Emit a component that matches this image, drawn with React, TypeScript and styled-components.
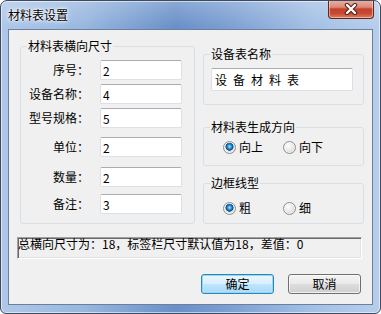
import React from 'react';
import styled, { createGlobalStyle } from 'styled-components';

const GlobalStyle = createGlobalStyle`
  html, body {
    margin: 0;
    padding: 0;
    background: #ffffff;
  }
  body {
    font-family: "Noto Sans CJK SC", "Noto Sans", sans-serif;
    font-size: 12px;
    color: #000;
  }
`;

const rows = [
  { label: '序号', value: '2', gap: 0 },
  { label: '设备名称', value: '4', gap: 4 },
  { label: '型号规格', value: '5', gap: 4 },
  { label: '单位', value: '2', gap: 9 },
  { label: '数量', value: '2', gap: 10 },
  { label: '备注', value: '3', gap: 7 },
];

function Radio({ label, checked }: { label: string; checked?: boolean }) {
  return (
    <RadioLabel>
      <RadioDot $checked={!!checked} />
      {label}
    </RadioLabel>
  );
}

function App() {
  return (
    <>
      <GlobalStyle />
      <Window>
        <TitleBar>
          <Title>材料表设置</Title>
          <CloseButton>
            <svg width="14" height="12" viewBox="0 0 14 12">
              <path
                d="M3 2 L11 10 M11 2 L3 10"
                stroke="#4a2219"
                strokeWidth="4.4"
                strokeLinecap="round"
              />
              <path
                d="M3 2 L11 10 M11 2 L3 10"
                stroke="#ffffff"
                strokeWidth="2.4"
                strokeLinecap="round"
              />
            </svg>
          </CloseButton>
        </TitleBar>
        <Client>
          <Columns>
            <SizeGroup>
              <Legend>材料表横向尺寸</Legend>
              {rows.map((row) => (
                <FieldRow key={row.label} $gap={row.gap}>
                  <FieldLabel>{row.label}：</FieldLabel>
                  <TextBox readOnly defaultValue={row.value} />
                </FieldRow>
              ))}
            </SizeGroup>
            <RightColumn>
              <NameGroup>
                <Legend>设备表名称</Legend>
                <WideBox readOnly defaultValue="设 备 材 料 表" />
              </NameGroup>
              <OptionGroup $height={47} $top={14} $pad={4}>
                <Legend>材料表生成方向</Legend>
                <RadioRow>
                  <Radio label="向上" checked />
                  <Radio label="向下" />
                </RadioRow>
              </OptionGroup>
              <OptionGroup $height={49} $top={9} $pad={9}>
                <Legend>边框线型</Legend>
                <RadioRow>
                  <Radio label="粗" checked />
                  <Radio label="细" />
                </RadioRow>
              </OptionGroup>
            </RightColumn>
          </Columns>
          <StatusBox>总横向尺寸为：18，标签栏尺寸默认值为18，差值：0</StatusBox>
          <ButtonRow>
            <DefaultButton>确定</DefaultButton>
            <PushButton>取消</PushButton>
          </ButtonRow>
        </Client>
      </Window>
    </>
  );
}

export default App;

const Window = styled.div`
  box-sizing: border-box;
  width: 381px;
  height: 314px;
  border: 1px solid #3d4b61;
  border-radius: 7px 7px 6px 6px;
  background:
    linear-gradient(180deg, rgba(255, 255, 255, 0.22) 0px, rgba(255, 255, 255, 0) 26px),
    linear-gradient(
      90deg,
      #afc8e9 0%,
      #98b7df 22%,
      #6990c8 46%,
      #7c9fd2 60%,
      #a4c0e5 82%,
      #b6ceec 100%
    );
  box-shadow: inset 0 0 0 1px rgba(255, 255, 255, 0.55);
  overflow: hidden;
`;

const TitleBar = styled.div`
  display: flex;
  align-items: flex-start;
  height: 28px;
  padding-left: 7px;
`;

const Title = styled.div`
  margin-top: 6px;
  line-height: 16px;
  font-size: 12px;
  color: #000;
  text-shadow: 0 0 6px #ffffff, 0 0 3px #ffffff, 0 0 2px #ffffff;
`;

const CloseButton = styled.div`
  display: flex;
  align-items: center;
  justify-content: center;
  box-sizing: border-box;
  width: 46px;
  height: 19px;
  margin-left: auto;
  margin-right: 6px;
  margin-top: -1px;
  border: 1px solid #5a2a22;
  border-top: none;
  border-radius: 0 0 4px 4px;
  background: linear-gradient(
    180deg,
    #eab3a6 0%,
    #d98a78 40%,
    #c4402a 50%,
    #c94a32 75%,
    #e07d5e 100%
  );
  box-shadow: inset 0 0 0 1px rgba(255, 220, 210, 0.55);
`;

const Client = styled.div`
  box-sizing: border-box;
  height: 276px;
  margin: 0 7px;
  border: 1px solid #6c7f9c;
  background: #f0f0f0;
  padding: 8px 0 0 11px;
`;

const Columns = styled.div`
  display: flex;
  align-items: flex-start;
  gap: 8px;
`;

const GroupBase = styled.fieldset`
  box-sizing: border-box;
  margin: 0;
  min-width: 0;
  border: 1px solid #d5dfe5;
  border-radius: 3px;
`;

const Legend = styled.legend`
  margin-left: 6px;
  padding: 0 1px;
  line-height: 16px;
  font-size: 12px;
  color: #000;
`;

const SizeGroup = styled(GroupBase)`
  width: 175px;
  height: 186px;
  padding: 6px 0 0 0;
`;

const FieldRow = styled.div<{ $gap: number }>`
  display: flex;
  align-items: center;
  height: 20px;
  margin-top: ${(p) => p.$gap}px;
`;

const FieldLabel = styled.span`
  width: 68px;
  text-align: right;
  line-height: 20px;
`;

const TextBox = styled.input`
  box-sizing: border-box;
  width: 82px;
  height: 20px;
  margin: 0 0 0 11px;
  padding: 0 2px;
  border: 1px solid #dbdfe6;
  border-top-color: #abadb3;
  border-radius: 2px;
  background: #ffffff;
  font-family: "Noto Sans CJK SC", sans-serif;
  font-size: 12px;
  color: #000;
  outline: none;
`;

const RightColumn = styled.div`
  display: flex;
  flex-direction: column;
  width: 161px;
  margin-top: 8px;
`;

const NameGroup = styled(GroupBase)`
  width: 161px;
  height: 59px;
  padding: 6px 0 0 0;
`;

const WideBox = styled(TextBox)`
  width: 142px;
  height: 23px;
  margin-left: 7px;
  padding-left: 3px;
  word-spacing: 3.3px;
`;

const OptionGroup = styled(GroupBase)<{ $height: number; $top: number; $pad: number }>`
  width: 161px;
  height: ${(p) => p.$height}px;
  margin-top: ${(p) => p.$top}px;
  padding: ${(p) => p.$pad}px 0 0 0;
`;

const RadioRow = styled.div`
  display: flex;
  align-items: center;
  height: 16px;
  padding-left: 19px;
`;

const RadioLabel = styled.label`
  display: flex;
  align-items: center;
  gap: 3px;
  width: 60px;
  line-height: 16px;
`;

const RadioDot = styled.span<{ $checked: boolean }>`
  box-sizing: border-box;
  width: 13px;
  height: 13px;
  border: 1px solid #8e8f8f;
  border-radius: 50%;
  background: ${(p) =>
    p.$checked
      ? 'radial-gradient(circle at 50% 42%, #b8ecff 0px, #36a3e6 1.6px, #1466ad 3px, #0d3f74 3.8px, rgba(255,255,255,0) 4.3px), radial-gradient(circle at 40% 35%, #ffffff 0%, #e2e2e2 60%, #c4c4c4 100%)'
      : 'radial-gradient(circle at 40% 35%, #ffffff 0%, #e4e4e4 55%, #c6c6c6 100%)'};
  box-shadow: inset 0 0 0 1px rgba(255, 255, 255, 0.6);
`;

const StatusBox = styled.div`
  box-sizing: border-box;
  width: 345px;
  height: 22px;
  margin: 13px 0 0 -3px;
  border: 1px solid;
  border-color: #a0a0a0 #ffffff #ffffff #a0a0a0;
  box-shadow: inset 1px 1px 0 #696969, inset -1px -1px 0 #e3e3e3;
  line-height: 12px;
  white-space: nowrap;
  font-size: 12px;
`;

const ButtonRow = styled.div`
  display: flex;
  justify-content: flex-end;
  gap: 14px;
  margin: 15px 11px 0 0;
`;

const PushButton = styled.div`
  box-sizing: border-box;
  display: flex;
  align-items: center;
  justify-content: center;
  width: 73px;
  height: 20px;
  border: 1px solid #707070;
  border-radius: 3px;
  background: linear-gradient(180deg, #f2f2f2 0%, #ebebeb 48%, #dddddd 52%, #cfcfcf 100%);
  box-shadow: inset 0 0 0 1px rgba(255, 255, 255, 0.7);
  font-size: 12px;
  line-height: 18px;
`;

const DefaultButton = styled(PushButton)`
  border-color: #3c7fb1;
  background: linear-gradient(180deg, #eaf6fd 0%, #d9f0fc 48%, #bee6fd 52%, #a7d9f5 100%);
  box-shadow: inset 0 0 0 1px #7ee0fd, inset 0 0 2px 1px rgba(255, 255, 255, 0.5);
`;
